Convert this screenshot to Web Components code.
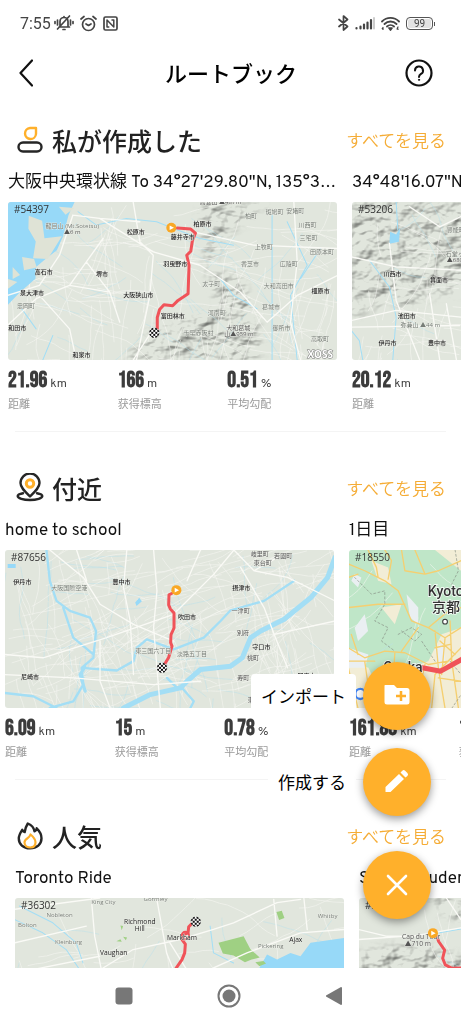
<!DOCTYPE html>
<html lang="ja">
<head>
<meta charset="utf-8">
<meta name="viewport" content="width=device-width, initial-scale=1">
<title>ルートブック</title>
<style>
  body { margin: 0; background: #fff; color: #000; font-family: Roboto, "Noto Sans CJK JP", sans-serif; }
</style>
</head>
<body>
<route-book-app>
  <status-bar slot="status" time="7:55" battery="99"></status-bar>
  <page-header slot="header">ルートブック</page-header>

  <route-section icon="user" style="--inset: 8px; --top: 22px">
    <span slot="title">私が作成した</span>
    <route-card number="#54397" map="osaka" distance="21.96" climb="166" grade="0.51">大阪中央環状線 To 34°27'29.80"N, 135°3…</route-card>
    <route-card number="#53206" map="ikeda" distance="20.12" climb="210" grade="1.04">34°48'16.07"N</route-card>
  </route-section>

  <route-section icon="pin" style="--inset: 5px">
    <span slot="title">付近</span>
    <route-card number="#87656" map="suita" distance="6.09" climb="15" grade="0.78">home to school</route-card>
    <route-card number="#18550" map="kyoto" distance="161.88" climb="1120" grade="0.69">1日目</route-card>
  </route-section>

  <route-section icon="fire" style="--inset: 15px">
    <span slot="title">人気</span>
    <route-card number="#36302" map="toronto">Toronto Ride</route-card>
    <route-card number="#35714" map="cap">Sentier Auden</route-card>
  </route-section>

  <fab-menu slot="fab">
    <fab-button icon="folder">インポート</fab-button>
    <fab-button icon="pencil">作成する</fab-button>
    <fab-button class="toggle" icon="close" name="閉じる"></fab-button>
  </fab-menu>
  <system-nav slot="nav"></system-nav>
</route-book-app>

<script>
const define = (name, render) => customElements.define(name, class extends HTMLElement {
  connectedCallback() {
    if (this.shadowRoot) return;
    this.attachShadow({ mode: 'open' }).innerHTML = render(this);
  }
});
const JP = '"Noto Sans CJK JP", sans-serif';

/* ---------- App frame ---------- */
define('route-book-app', () => `
<style>
  :host { display: flex; flex-direction: column; height: 100vh; background: #fff; }
  .body { position: relative; flex: 1; min-height: 0; }
  main { height: 100%; overflow: hidden auto; scrollbar-width: none; }
  .fab { position: absolute; right: 30px; bottom: 49px; }
</style>
<slot name="status"></slot>
<slot name="header"></slot>
<div class="body">
  <main><slot></slot></main>
  <div class="fab"><slot name="fab"></slot></div>
</div>
<slot name="nav"></slot>`);

define('status-bar', el => `
<style>
  :host { display: flex; align-items: center; justify-content: space-between; height: 46px; padding: 0 26px 0 20px; box-sizing: border-box; color: #444; font-size: 16px; }
  div { display: flex; align-items: center; gap: 3px; }
  .icons { gap: 6px; }
  .right { gap: 6px; }
  svg { display: block; fill: none; stroke: currentColor; stroke-width: 1.7; stroke-linecap: round; stroke-linejoin: round; }
  .battery { position: relative; box-sizing: border-box; width: 27px; height: 13px; border: 1px solid #555; border-radius: 4px; justify-content: center; background: #e2e2e2; box-shadow: inset 0 0 0 1px #fff; font: 10px/11px Roboto; margin-right: 2px; }
  .battery::after { content: ""; position: absolute; right: -3px; top: 4px; width: 1px; height: 4px; background: #555; }
</style>
<div>
  <span>${el.getAttribute('time')}</span>
  <div class="icons">
    <svg width="20" height="18" viewBox="0 0 20 18"><path d="M5 13h10.500M6 13V7.500a4 4 0 0 1 8 0V13M9 15.500h2M10 2.500v1M15.500 2 3.500 15"/><path d="M3.500 6v5M1 7.500v2M16.500 6v5M19 7.500v2"/></svg>
    <svg width="17" height="17" viewBox="0 0 17 17"><circle cx="8.500" cy="9.500" r="6"/><path d="m6 9 2.500 1.500L11 9M1 4l3-2.500M16 4l-3-2.500"/></svg>
    <svg width="15" height="15" viewBox="0 0 15 15"><rect x="1" y="1" width="13" height="13" rx="1.500"/><path d="M5.800 11H4V4l6.800 7V4H9" style="stroke-width:1.500"/></svg>
  </div>
</div>
<div class="right">
  <svg width="11" height="16" viewBox="0 0 11 16"><path d="m1 4.500 8.500 7L5.500 15V1l4 3.500-8.500 7"/></svg>
  <svg width="20" height="14" viewBox="0 0 20 14"><path d="M1.500 12.500v-.5M5.500 12.500v-2M9 12.500V8.500M12.500 12.500V6.500M16 12.500V4" style="stroke-width:2.200"/><path d="M19 12.500V2" stroke="#ccc" style="stroke-width:2"/></svg>
  <svg width="19" height="15" viewBox="0 0 19 15"><path d="M1 5.500a12 12 0 0 1 17 0M3.500 8a8.500 8.500 0 0 1 12 0M6 10.500a5 5 0 0 1 7 0" style="stroke-width:1.800"/><path d="M8 12h3l-1.500 2z" fill="currentColor"/><path d="M2 11.500v2M1.200 12.500 2 11.500M17 11l-.8 1.600M16.200 13.200h1" style="stroke-width:1.200"/></svg>
  <div class="battery">${el.getAttribute('battery')}</div>
</div>`);

define('page-header', () => `
<style>
  :host { display: grid; grid-template-columns: 40px 1fr 40px; align-items: center; height: 54px; padding: 0 22px 0 6px; box-sizing: border-box; }
  h1 { margin: 0; padding: 0 0 2px 17px; text-align: center; font: 500 22px/32px ${JP}; }
  button { display: grid; place-items: center; width: 40px; height: 40px; padding: 0; border: 0; background: none; color: #111; }
  svg { display: block; fill: none; stroke: currentColor; stroke-linecap: round; stroke-linejoin: round; }
</style>
<button aria-label="戻る"><svg width="14" height="28" viewBox="0 0 14 28" stroke-width="2.200"><path d="M13 1.500 1.500 14 13 26.500"/></svg></button>
<h1><slot></slot></h1>
<button aria-label="ヘルプ"><svg width="28" height="28" viewBox="0 0 28 28" stroke-width="2.200"><circle cx="14" cy="14" r="12.500"/><path d="M10 11.500a4 4 0 1 1 6 3.400c-1.400.9-2 1.400-2 3" stroke-width="2"/><circle cx="14" cy="20.800" r=".6" fill="currentColor" stroke-width="1"/></svg></button>`);

/* ---------- Section ---------- */
const headingIcons = {
  user: `<path d="M15 3h6v6a5.500 5.500 0 1 1-6-6z" stroke="#ffb02b"/><rect x="3.500" y="17.500" width="23" height="9" rx="4.500"/>`,
  pin: `<path d="M15 23.500C10 18.500 5.500 14.500 5.500 10a9.500 9.500 0 0 1 19 0c0 4.500-4.500 8.500-9.500 13.500z"/><circle cx="15" cy="10.500" r="3.700" stroke="#ffb02b" stroke-width="3"/><path d="M8 20.200c-3.300.6-5.300 1.600-5.300 2.900 0 2.200 5.500 3.900 12.300 3.900s12.300-1.700 12.300-3.900c0-1.300-2-2.300-5.300-2.900"/>`,
  fire: `<path d="M12.800 2.500c4.500 1.800 6.200 4.600 6.700 7.800 1.500-.6 2-1.600 2.200-3 3.600 3.400 4.800 6.600 4.800 10 0 6-4.700 10-11.500 10S3.800 23.200 3.800 17.500c0-3.300 1.700-6.100 3.400-8.700.6 1.400 1.300 2 2.500 2.300.2-3 1-5.200 3.100-8.600z"/><path d="M15.500 13.500c3 2.500 5 4.800 5 7.800 0 3.200-2 5.200-5 5.200s-6-1.600-6-5c0-2.200 1.400-3.300 3-4.300 1.300-.8 2.300-1.700 3-3.700z" stroke="#ffb02b" stroke-width="2.200"/>`
};
define('route-section', el => `
<style>
  :host { display: block; padding-top: var(--top, 38px); }
  header { display: flex; align-items: center; height: 36px; padding: 0 15px 0 15px; margin-bottom: 10px; }
  svg { flex: none; margin-right: 7px; fill: none; stroke: #262626; stroke-width: 2.400; stroke-linejoin: round; stroke-linecap: round; }
  h2 { margin: 0; flex: 1; font: 500 25px/36px ${JP}; color: #222; }
  a { font: 350 17px/24px ${JP}; color: #f5ac35; text-decoration: none; }
  .row { display: flex; gap: 15px; overflow: auto hidden; scrollbar-width: none; padding: 0 var(--inset); }
  hr { height: 1px; margin: 19px 15px 0; border: 0; background: #f4f4f4; }
</style>
<header>
  <svg width="30" height="30" viewBox="0 0 30 30" aria-hidden="true">${headingIcons[el.getAttribute('icon')]}</svg>
  <h2><slot name="title"></slot></h2>
  <a href="#all">すべてを見る</a>
</header>
<div class="row"><slot></slot></div>
<hr>`);

define('route-card', el => {
  const a = n => el.getAttribute(n);
  const stat = (v, unit, label) => `<div><dt>${label}</dt><dd>${v}<small>${unit}</small></dd></div>`;
  return `
<style>
  :host { display: block; flex: 0 0 calc(100vw - 132px); }
  h3 { margin: 0 0 4px; font: 400 17px/30px Overpass, Roboto, ${JP}; white-space: nowrap; color: #111; }
  .map { position: relative; border-radius: 3px; overflow: hidden; }
  .map span { position: absolute; left: 6px; top: 0; font: 10px/14px "Open Sans"; color: #333; }
  dl { display: grid; grid-template-columns: repeat(3, 1fr); margin: 8px 0 0; }
  dl div { display: flex; flex-direction: column-reverse; }
  dt { margin-top: 2px; font: 11px/18px ${JP}; color: #999; }
  dd { margin: 0; height: 24px; font: 700 22px/26px "Bebas Neue", "Liberation Sans Narrow", Roboto; color: #3c3c3c; white-space: nowrap; }
  small { font: 12px/24px Overpass, Roboto; margin-left: 3px; color: #444; }
</style>
<h3><slot></slot></h3>
<div class="map"><route-map area="${a('map')}"></route-map><span>${a('number')}</span></div>
${a('distance') ? `<dl>${stat(a('distance'), 'km', '距離')}${stat(a('climb'), 'm', '获得標高')}${stat(a('grade'), '%', '平均勾配')}</dl>` : ''}`;
});

/* ---------- Maps ---------- */
function random(seed) {
  return () => { seed = (seed * 1664525 + 1013904223) % 4294967296; return seed / 4294967296; };
}
// Winding lines that follow two main directions, like a town's streets.
function streets(x0, y0, seed, count, tilt, length) {
  const r = random(seed);
  let d = '';
  for (let i = 0; i < count; i++) {
    let x = x0 + r() * 987, y = y0 + r() * 472;
    let t = tilt + (r() < .5 ? 0 : Math.PI / 2) + (r() - .5) * .5;
    d += `M${x.toFixed(0)} ${y.toFixed(0)}`;
    for (let k = 0, n = 3 + r() * length; k < n; k++) {
      t += (r() - .5) * .4;
      x += Math.cos(t) * 24; y += Math.sin(t) * 24;
      d += `L${x.toFixed(0)} ${y.toFixed(0)}`;
    }
  }
  return d;
}
const label = (x, y, s, cls = '') => `<text x="${x}" y="${y}" class="${cls}">${s}</text>`;
const start = (x, y) => `<g transform="translate(${x} ${y})"><circle r="15" fill="#f9a825"/><path d="M-5-7 8 0-5 7z" fill="#fff"/></g>`;
const finish = (x, y) => {
  let s = '';
  for (let i = 0; i < 5; i++) for (let j = 0; j < 5; j++) if ((i + j) % 2) s += `<rect x="${-15 + i * 6}" y="${-15 + j * 6}" width="6" height="6"/>`;
  return `<g transform="translate(${x} ${y})"><circle r="15" fill="#fff"/><g clip-path="url(#dot)" fill="#111">${s}</g><circle r="14" fill="none" stroke="#222" stroke-width="2" stroke-dasharray="6 5"/></g>`;
};
const maps = {
  osaka: { x: 24, y: 21, seed: 11, n: 120, tilt: .15, hills: 'M600 21 800 21 690 110 620 230 720 240 780 420 780 493 380 493 460 400 660 340 620 230z',
    art: `<path class="sea" d="M24 21H225L207 60 190 125 172 165 140 190 110 215 108 250 60 292 24 330z"/>
      <path class="land" d="m88 62 40 15 7 52 52-6-42 68-44-2 8-50-22-38zM68 185l36 6 8 26-38 8zM40 215l22 24-22 12zM178 35l46 4-26 20zM24 250l30 10-30 22z"/>
      <path class="river" d="M235 50 290 90 380 70 470 80 515 98 600 130 700 150 M860 80 920 210 870 300 890 493 M660 250 700 300 770 340 M130 493 160 420 M815 60V493 M960 160 900 250 M60 330 110 400"/>
      <path class="road" d="M220 60 180 180 120 270 24 300 M220 60 300 70 460 170 600 210 720 290 800 380 M300 70 420 80 M400 21 420 140 460 180 450 300 410 493 M24 390 110 310 210 270 330 290 M210 270 310 130 M580 110 760 150 1011 160 M880 21 890 200 870 380 900 493 M120 300 210 400 230 493 M800 380 890 300 1011 240 M400 493 460 400 M260 200 330 290 360 380"/>`,
    over: `<path class="track" d="m532 99 40 3 14 12-9 22-5 32-12 12 7 30-3 85-30 20-16 16-26-3-13 14-7 24 0 34"/>${start(514, 98)}${finish(463, 412)}
      ${label(660, 22, '高安山 ▲487m')}${label(218, 93, '龍目山 (Mt.Sotetsu)', 'dim')}${label(218, 112, '▲6 m')}${label(408, 111, '松原市', 'city')}${label(607, 87, '柏原市', 'city')}${label(548, 125, '藤井寺市', 'city')}${label(526, 207, '羽曳野市', 'city')}${label(133, 230, '高石市', 'city')}${label(307, 237, '堺市', 'city')}${label(98, 292, '泉大津市', 'city')}${label(415, 299, '大阪狭山市', 'city')}${label(518, 361, '富田林市', 'city')}${label(54, 396, '和田市', 'city')}${label(246, 477, '和泉市', 'city')}${label(960, 286, '橿原市', 'city')}
      ${label(80, 331, '忠岡町', 'dim')}${label(752, 64, '柏町', 'dim')}${label(822, 50, '斑鳩町', 'dim')}${label(884, 47, '安堵町', 'dim')}${label(921, 89, '川西町', 'dim')}${label(924, 128, '三宅町', 'dim')}${label(964, 170, '田原本町', 'dim')}${label(790, 156, '上牧町', 'dim')}${label(749, 207, '香芝市', 'dim')}${label(865, 205, '広陵町', 'dim')}${label(633, 265, '太子町', 'dim')}${label(835, 271, '大和高田市', 'dim')}${label(812, 336, '葛城市', 'dim')}${label(650, 353, '河南町', 'dim')}${label(595, 412, '千早赤阪村', 'dim')}${label(714, 396, '大和葛城')}${label(716, 415, '山▲959 m')}${label(843, 398, '御所市', 'dim')}${label(958, 431, '高取町', 'dim')}
      <text x="959" y="474" class="brand">XOSS</text>` },
  ikeda: { x: 66, y: 126, seed: 5, n: 90, tilt: .2, hills: 'M66 126H480V380L330 400 220 440 200 410 66 470z',
    art: `<path class="sea" d="m182 215 18 8 12-20-4 42-28 6z"/><path class="river" d="M200 126 205 210 M66 510 90 540 100 597 M120 300 180 380 200 470 190 597"/><path class="road" d="M66 290 200 320 393 330 M66 480 200 450 393 470 M300 400 330 597 M180 250 200 420 270 597 M393 170 330 200 240 140 M66 500 390 495 M350 430 380 597"/>`,
    over: `${label(189, 342, '川西市', 'city')}${label(328, 359, '箕面市', 'city')}${label(232, 466, '池田市', 'city')}${label(272, 494, '弥兼山 ▲44 m', 'dim')}${label(174, 548, '伊丹市', 'city')}${label(322, 548, '豊中市', 'city')}${label(378, 209, '豊能町', 'dim')}${label(384, 280, '石堂ヶ岡', 'dim')}${label(386, 299, '▲680 m')}` },
  suita: { x: 14, y: 28, seed: 23, n: 210, tilt: -.35,
    art: `<path class="river" style="stroke-width:7" d="M140 28 150 120 170 180 210 210 270 230 288 270 280 350 245 380 250 430 220 480 150 500 M190 200 220 290 280 340 M245 380 350 388 400 360 410 320 440 295 520 325 610 290 660 240 690 208 790 180 880 120 M14 455 100 465 170 500 M500 410 530 440 M545 440 580 480 570 500"/>
      <path class="river" style="stroke-width:15" d="M1002 50 980 110 930 170 850 235 780 270 750 290 725 350 690 375 600 385 560 420 540 440 450 460 370 500"/>
      <path class="river" style="stroke-width:9" d="M255 378 240 400 256 450"/>
      <path class="sea" d="M24 70h24v12H24zM405 185l12-14 8 10-16 14z"/>
      <path class="road" d="M460 28 470 150 460 260 480 500 M150 28 250 110 300 190 400 250 520 300 M14 340 130 350 320 290 520 220 640 100 700 28 M300 300 300 420 330 500 M720 80 790 200 820 280 860 380 M700 28 760 90 860 110 1002 180 M820 280 1002 240 M230 28 260 120 M380 28 370 140 390 240 400 400 M14 400 220 410 460 430 600 420 M600 28 560 120 M760 90 830 50"/>`,
    over: `<path class="track" d="m514 158-8 4-1 30 5 12 11 12 0 45-9 20-1 24 4 10-10 34-13 22"/>${start(528, 148)}${finish(485, 380)}
      ${label(68, 125, '伊丹市', 'city')}${label(364, 125, '豊中市', 'city')}${label(208, 142, '大阪国際空港', 'dim')}${label(722, 142, '摂津市', 'city')}${label(560, 229, '吹田市', 'city')}${label(782, 318, '守口市', 'city')}${label(91, 406, '尼崎市', 'city')}${label(917, 403, '門真市', 'city')}${label(777, 39, '岐里町')}${label(786, 68, '東台町')}${label(847, 47, '若園町')}${label(720, 209, '一津町')}${label(727, 275, '別府')}${label(757, 350, '桃町')}${label(728, 409, '寿町')}${label(459, 331, '東三国六丁目', 'dim')}${label(575, 339, '淡路五丁目', 'dim')}${label(750, 476, '東')}` },
  kyoto: { x: 41, y: 268, seed: 31, n: 24, tilt: .5, base: '#bfe6c8',
    art: `<path fill="#f2edd6" d="M150 741 170 640 280 600 320 520 378 500V741z M300 268 378 268 378 330 340 300z M140 440l60-10-20 60z M41 600l60 20 30 60-40 61H41z M110 300l50 20 10 50-40-10z"/><path fill="#eaeff2" d="M215 400 250 440 250 490 225 470z M60 500l30-40 10 50-30 30z M41 560l60 20-10 40-50 0z M60 340l20 10-10 30-20-20z M300 560l30-20 0 80-20 20z"/>
      <path class="amber" d="M41 310 90 330 150 360 190 390 230 480 280 500 330 530 378 500 M100 268 125 320 130 350 M150 268 170 300 160 355 M41 350 70 340 M240 268 270 340 310 330 378 300 M41 560 90 590 150 570 210 575 280 610 340 600 M41 600 120 600 M300 510 310 620 330 741 M330 530 320 640 M41 620 70 741 M378 560 300 640 290 741 M200 570 250 500 M41 440 130 430 210 430 M280 500 340 450 378 440 M90 600 110 741 M180 575 170 741 M270 610 240 741 M345 480 350 600 370 741 M315 540 360 580 M300 560 345 550 M310 650 378 660 M70 580 50 520 M200 268 210 330 270 340"/>
      <path class="rail" d="M60 350 110 400 150 390 150 430 120 480 160 500 140 540 180 570 M190 520 230 500 260 520 240 540 200 510 M360 268 370 330 350 370 M300 600 260 540 M345 600 378 640 M350 741 378 700"/>`,
    over: `<path class="track" style="stroke-width:15" d="m262 620 55 10 61-34 60-40"/><g class="big">${label(332, 390, 'Kyoto')}${label(333, 438, '京都')}${label(204, 618, 'Osaka')}</g><circle cx="330" cy="482" r="7" fill="#fff" stroke="#333" stroke-width="3"/><circle cx="77" cy="698" r="15" fill="#fff" stroke="#4285f4" stroke-width="7"/>` },
  toronto: { x: 45, y: 36, seed: 47, n: 60, tilt: -.2,
    art: `<path class="sea" d="M775 248 800 205 830 220 870 200 900 210 930 170 1032 155V508H760z"/>
      <path class="park" d="m655 170 75-20 20 38 28 26-24 6-20 8-34-20-32-6zM828 78l16-4 8 22-16 6zM362 118l8 2-4 12zM350 165l12-6 4 8zM370 152l12 2-4 8zM765 228l24-4 8 8-20 8z"/>
      <path class="river" d="M45 100 130 140 200 190 240 250 M60 60 160 110 230 170 250 230 M630 120 640 200 700 230"/>
      <path class="road" style="stroke-width:4" d="M275 36 285 150 305 250 M470 36 500 200 520 250 M310 245 400 190 540 160 640 130 700 110 830 50 900 40 M510 170 560 250 M820 40 830 150 M910 36 920 130 M640 245 740 200 900 140 1032 130 M45 170 260 120 M100 250 300 210 M45 70 300 36"/>`,
    over: `<path class="track" d="m580 108-14 14-2 18-14 6-4 14 10 14-2 26-8 20-22 32-20 60"/><circle cx="556" cy="148" r="11" fill="none" stroke="#f05359" stroke-width="6"/>${finish(587, 107)}
      ${label(311, 48, 'King City', 'dim')}${label(467, 38, 'Gormley', 'dim')}${label(180, 86, 'Nobleton', 'dim')}${label(84, 118, 'Bolton', 'dim')}${label(207, 168, 'Kleinburg', 'dim')}${label(811, 180, 'Pickering', 'dim')}${label(981, 90, 'Whitby', 'dim')}<g class="mid">${label(420, 106, 'Richmond')}${label(420, 128, 'Hill')}${label(546, 153, 'Markham')}${label(342, 200, 'Vaughan')}${label(886, 159, 'Ajax')}</g>` },
  cap: { x: 117, y: 36, seed: 9, n: 16, tilt: .1, hills: 'M117 200 220 180 330 180 470 230 470 508H117z M330 36H500V120L380 90z',
    art: `<path class="river" d="M360 140 470 120"/><path class="road" d="M117 130 200 150 280 150 423 125 M380 36 423 100 M117 160 260 150"/>`,
    over: `<path class="track" d="m352 152 5 14 18 26-6 24 8 20 20 10 50-2"/>${label(305, 150, 'Cap du Tour', 'peak')}${label(295, 171, '▲710 m', 'peak')}${start(340, 141)}` }
};
define('route-map', el => {
  const m = maps[el.getAttribute('area')];
  return `
<style>
  :host { display: block; aspect-ratio: 329 / 158; }
  svg { display: block; width: 100%; height: 100%; }
  path { stroke-linejoin: round; stroke-linecap: round; }
  text { font: 18px "Open Sans", ${JP}; fill: #555; text-anchor: middle; dominant-baseline: central; paint-order: stroke; stroke: #eef0ea; stroke-width: 2px; }
  .city { fill: #222; font-weight: 500; }
  .dim { fill: #777d77; }
  .peak { font-size: 20px; }
  .mid text { font-size: 20px; fill: #222; }
  .big text { font: 500 42px Roboto, ${JP}; fill: #333; stroke: #fff; stroke-width: 4px; }
  .brand { font: 700 30px "Open Sans"; fill: #fff; stroke: #777; stroke-width: 3px; }
  .sea { fill: #97d9f8; } .land { fill: #dfe3d6; } .park { fill: #9fd083; }
  .river { fill: none; stroke: #a3def5; stroke-width: 3; }
  .road { fill: none; stroke: #fafaf6; stroke-width: 4; }
  .minor { fill: none; stroke: #f8f8f3; stroke-width: 2; opacity: .8; }
  .brook { fill: none; stroke: #b9e2ec; stroke-width: 2; opacity: .7; }
  .amber { fill: none; stroke: #f5cf70; stroke-width: 4; }
  .rail { fill: none; stroke: #879086; stroke-width: 2; stroke-dasharray: 6 7; }
  .track { fill: none; stroke: #f05359; stroke-width: 9; }
  .hills { mix-blend-mode: multiply; opacity: .75; }
</style>
<svg viewBox="${m.x} ${m.y} 987 472" preserveAspectRatio="xMidYMin slice" role="img" aria-label="ルートの地図">
  <defs>
    <clipPath id="dot"><circle r="15"/></clipPath>
    <filter id="relief" filterUnits="userSpaceOnUse" x="${m.x}" y="${m.y}" width="987" height="472" color-interpolation-filters="sRGB">
      <feTurbulence type="fractalNoise" baseFrequency=".018 .028" numOctaves="3" seed="${m.seed}"/>
      <feDiffuseLighting surfaceScale="13" diffuseConstant="1.140" lighting-color="#fff"><feDistantLight azimuth="225" elevation="60"/></feDiffuseLighting>
    </filter>
    <filter id="soft"><feGaussianBlur stdDeviation="14"/></filter>
    <mask id="range"><path d="${m.hills || ''}" fill="#fff" filter="url(#soft)"/></mask>
  </defs>
  <rect x="${m.x}" y="${m.y}" width="987" height="480" fill="${m.base || '#e1e6dd'}"/>
  ${m.hills ? `<g class="hills" mask="url(#range)"><rect x="${m.x}" y="${m.y}" width="987" height="472" filter="url(#relief)"/></g>` : ''}
  <path class="brook" d="${streets(m.x, m.y, m.seed + 3, m.n / 4, m.tilt + .5, 6)}"/>
  <path class="minor" d="${streets(m.x, m.y, m.seed, m.n, m.tilt, 8)}"/>
  ${m.art}${m.over}
</svg>`;
});

/* ---------- Floating actions ---------- */
define('fab-menu', () => `
<style>
  :host { display: flex; flex-direction: column; align-items: flex-end; gap: 18px; }
  ::slotted(.toggle) { margin-top: 17px; }
</style>
<slot></slot>`);

const fabIcons = {
  folder: `<path d="M4 5h9l3 3h10a2.500 2.500 0 0 1 2.500 2.500V22a2.500 2.500 0 0 1-2.500 2.500H6A2.500 2.500 0 0 1 3.500 22V5.500z" fill="#fff"/><path d="M20 11v10M15 16h10" stroke="#ffb02b" stroke-width="2.500"/>`,
  pencil: `<path d="M5 27v-5L18.500 9l5 5L10 27zM20 7.500l1.800-1.700a2 2 0 0 1 2.800 0l2.300 2.300a2 2 0 0 1 0 2.800L25 12.500z" fill="#fff" transform="translate(-.5 -1)"/>`,
  close: `<path d="M7 7l18 18M25 7 7 25" stroke="#fff" stroke-width="2.600" stroke-linecap="round"/>`
};
define('fab-button', el => {
  const text = el.textContent.trim();
  return `
<style>
  :host { display: block; }
  button { display: flex; align-items: center; gap: 7px; padding: 0; border: 0; background: none; color: #000; }
  .label { padding: 0 10px; border-radius: 4px; background: #fff; font: 17px/44px ${JP}; }
  .disc { display: grid; place-items: center; width: 68px; height: 68px; border-radius: 50%; background: #ffb02b; box-shadow: 0 3px 8px rgba(0, 0, 0, .4); }
</style>
<button ${text ? '' : `aria-label="${el.getAttribute('name')}"`}>
  ${text ? '<span class="label"><slot></slot></span>' : ''}
  <span class="disc"><svg width="32" height="32" viewBox="0 0 32 32" aria-hidden="true">${fabIcons[el.getAttribute('icon')]}</svg></span>
</button>`;
});

define('system-nav', () => `
<style>
  :host { display: flex; justify-content: center; align-items: center; gap: 57px; height: 56px; flex: none; padding-right: 3px; background: #fff; }
  button { display: grid; place-items: center; width: 48px; height: 48px; padding: 0; border: 0; background: none; color: #777; }
  svg { display: block; fill: currentColor; }
</style>
<button aria-label="最近のアプリ"><svg width="18" height="18"><rect width="17" height="17" x=".5" y=".5" rx="3"/></svg></button>
<button aria-label="ホーム"><svg width="24" height="24"><circle cx="12" cy="12" r="10.500" fill="none" stroke="currentColor" stroke-width="2"/><circle cx="12" cy="12" r="6.500"/></svg></button>
<button aria-label="戻る"><svg width="18" height="20"><path d="M16 1a1 1 0 0 1 1 1v16a1 1 0 0 1-1 1L1 10.500v-1z"/></svg></button>`);
</script>
</body>
</html>
